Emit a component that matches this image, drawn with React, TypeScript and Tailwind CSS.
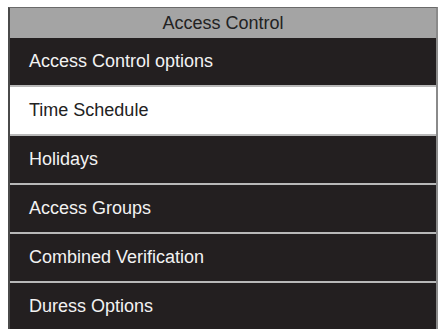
const items = [
  "Access Control options",
  "Time Schedule",
  "Holidays",
  "Access Groups",
  "Combined Verification",
  "Duress Options",
];

const selected = 1;

export default function App() {
  return (
    <div className="w-[443px] h-[329px] bg-white overflow-hidden pt-[7px] pl-[8px] font-['Liberation_Sans',Arial,sans-serif]">
      <div className="w-[430px] border-t border-x-2 border-t-[#6a6a6a] border-l-[#4a4a4a] border-r-[#8a8a8a] bg-[#231f20]">
        <div className="h-[30px] bg-[#a4a4a4] flex items-center justify-center text-[18px] text-[#222]">
          Access Control
        </div>
        {items.map((label, i) => (
          <div
            key={label}
            className={
              (i > 0 ? "h-[49px] border-t-2 border-[#b8b8b8] " : "h-[47px] ") +
              (i === selected
                ? "bg-white text-[#222] "
                : "bg-[#231f20] text-[#f2f2f2] ") +
              "flex items-center pl-[19px] text-[18px]"
            }
          >
            {label}
          </div>
        ))}
      </div>
    </div>
  );
}
